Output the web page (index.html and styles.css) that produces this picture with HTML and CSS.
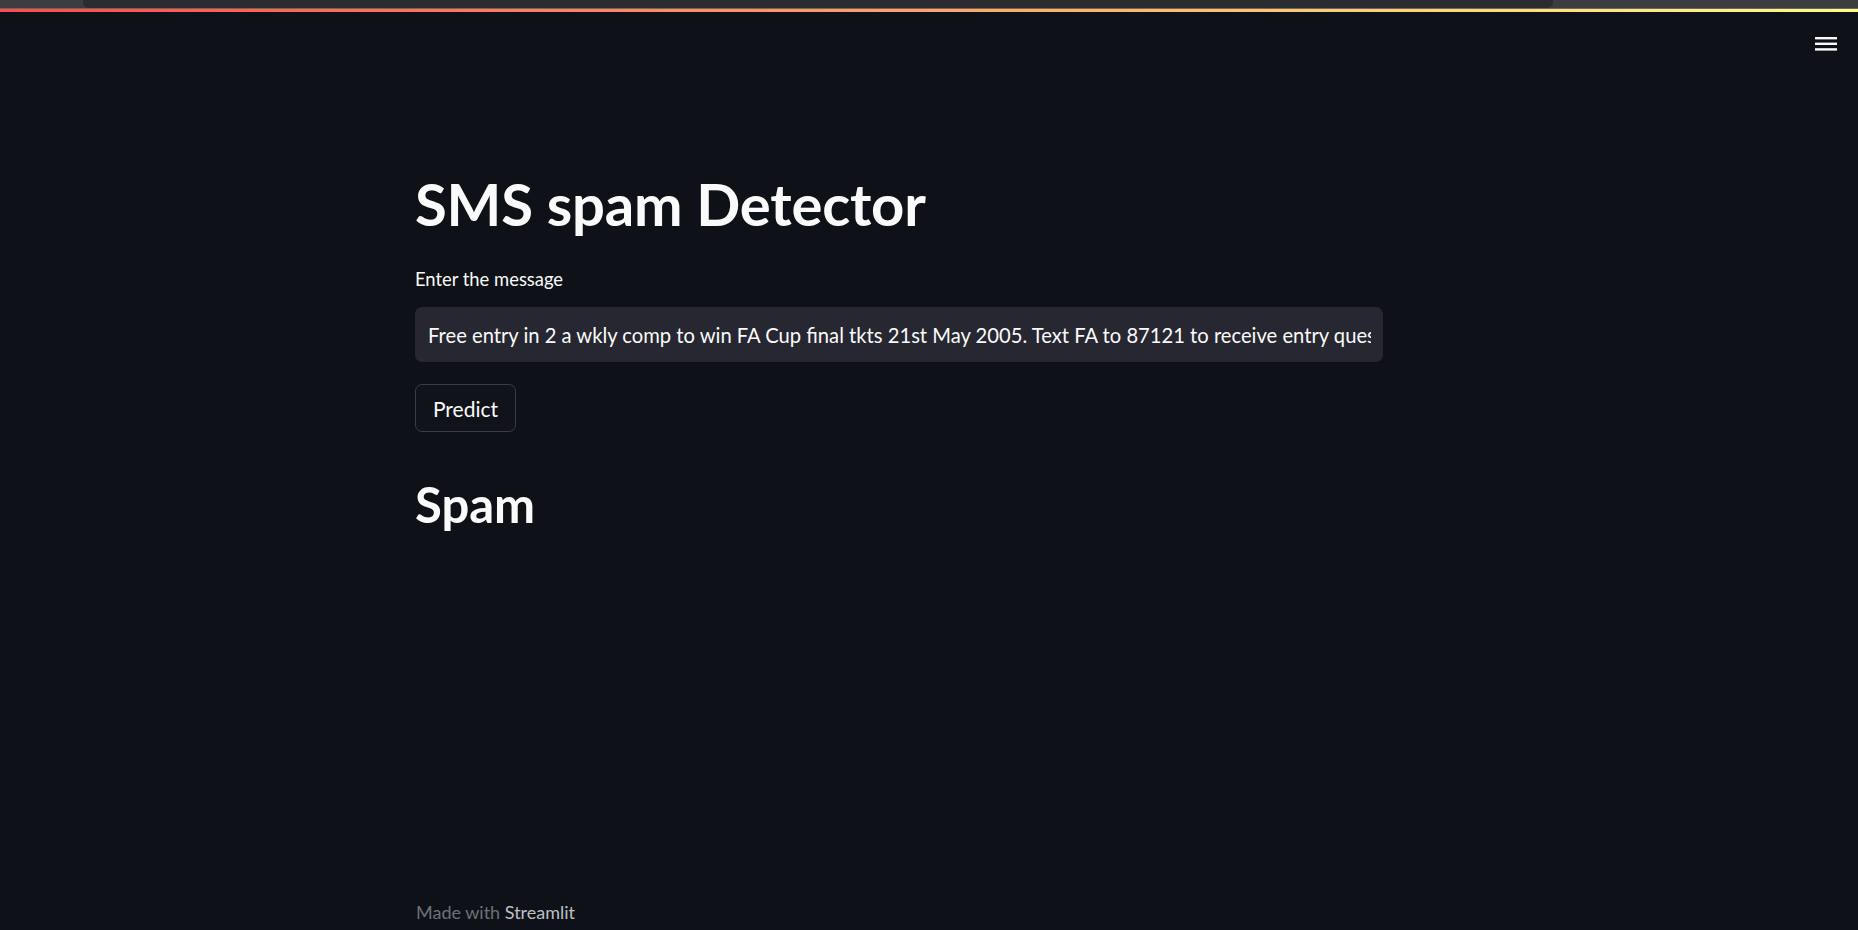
FILE: index.html
```html
<!DOCTYPE html>
<html lang="en">
<head>
<meta charset="utf-8">
<title>SMS spam Detector</title>
<link rel="stylesheet" href="styles.css">
</head>
<body>
<div class="chrome"><div class="chrome-tab"></div></div>
<div class="chrome-line"></div>
<div class="decoration"></div>
<header class="toolbar">
  <button class="menu-btn" aria-label="Main menu">
    <svg width="22" height="14" viewBox="0 0 22 14"><rect x="0" y="0" width="22" height="2.4" fill="#fafafa"/><rect x="0" y="5.6" width="22" height="2.4" fill="#fafafa"/><rect x="0" y="11.2" width="22" height="2.4" fill="#fafafa"/></svg>
  </button>
</header>
<main class="main">
  <div class="block">
    <h1 class="title">SMS spam Detector</h1>
    <label class="label" for="msg">Enter the message</label>
    <input id="msg" class="text-input" type="text" value="Free entry in 2 a wkly comp to win FA Cup final tkts 21st May 2005. Text FA to 87121 to receive entry question(std txt rate)T&amp;C's apply 08452810075over18's">
    <button class="btn">Predict</button>
    <h2 class="result">Spam</h2>
  </div>
</main>
<footer class="footer"><span class="made">Made with</span> <span class="brand">Streamlit</span></footer>
</body>
</html>
```
FILE: styles.css
```css
html, body {
  margin: 0;
  padding: 0;
  background: #0e1117;
  color: #fafafa;
  font-family: Lato, "Noto Sans", sans-serif;
  height: 930px;
  overflow: hidden;
}
.chrome {
  height: 8px;
  background: #3b3c3f;
}
.chrome-tab {
  margin-left: 83px;
  width: 1470px;
  height: 8px;
  background: #2b2c2f;
  border-radius: 0 0 6px 6px;
}
.chrome-line {
  height: 1px;
  background: #66676a;
}
.decoration {
  height: 3px;
  background: linear-gradient(90deg, #ff4b4b, #fffd80);
}
.toolbar {
  display: flex;
  justify-content: flex-end;
  padding: 25px 21px 0 0;
}
.menu-btn {
  background: none;
  border: 0;
  padding: 0;
  width: 22px;
  height: 14px;
  display: block;
}
.menu-btn svg { display: block; }
.main {
  padding-left: 415px;
}
.block {
  width: 968px;
  display: flex;
  flex-direction: column;
  align-items: flex-start;
}
.title {
  margin: 0;
  padding-top: 118px;
  font-size: 58px;
  font-weight: 700;
  line-height: 70px;
  letter-spacing: -0.2px;
}
.label {
  margin-top: 28px;
  font-size: 18.4px;
  line-height: 24px;
}
.text-input {
  margin-top: 16px;
  width: 968px;
  height: 55px;
  box-sizing: border-box;
  background: #262730;
  border: 0;
  border-radius: 7px;
  color: #fafafa;
  padding: 0 12px 0 13px;
  font-family: Lato, "Noto Sans", sans-serif;
  font-size: 20.2px;
  outline: none;
}
.btn {
  margin-top: 22px;
  width: 101px;
  height: 48px;
  background: #10131a;
  border: 1px solid #3a3d45;
  border-radius: 7px;
  color: #fafafa;
  font-family: Lato, "Noto Sans", sans-serif;
  font-size: 21px;
  padding: 0;
}
.result {
  margin: 0;
  padding-top: 42px;
  font-size: 49px;
  font-weight: 700;
  line-height: 60px;
}
.footer {
  position: absolute;
  left: 416px;
  top: 900px;
  font-size: 18px;
  line-height: 24px;
}
.made { color: #6f7175; }
.brand { color: #bfc0c2; }
```
